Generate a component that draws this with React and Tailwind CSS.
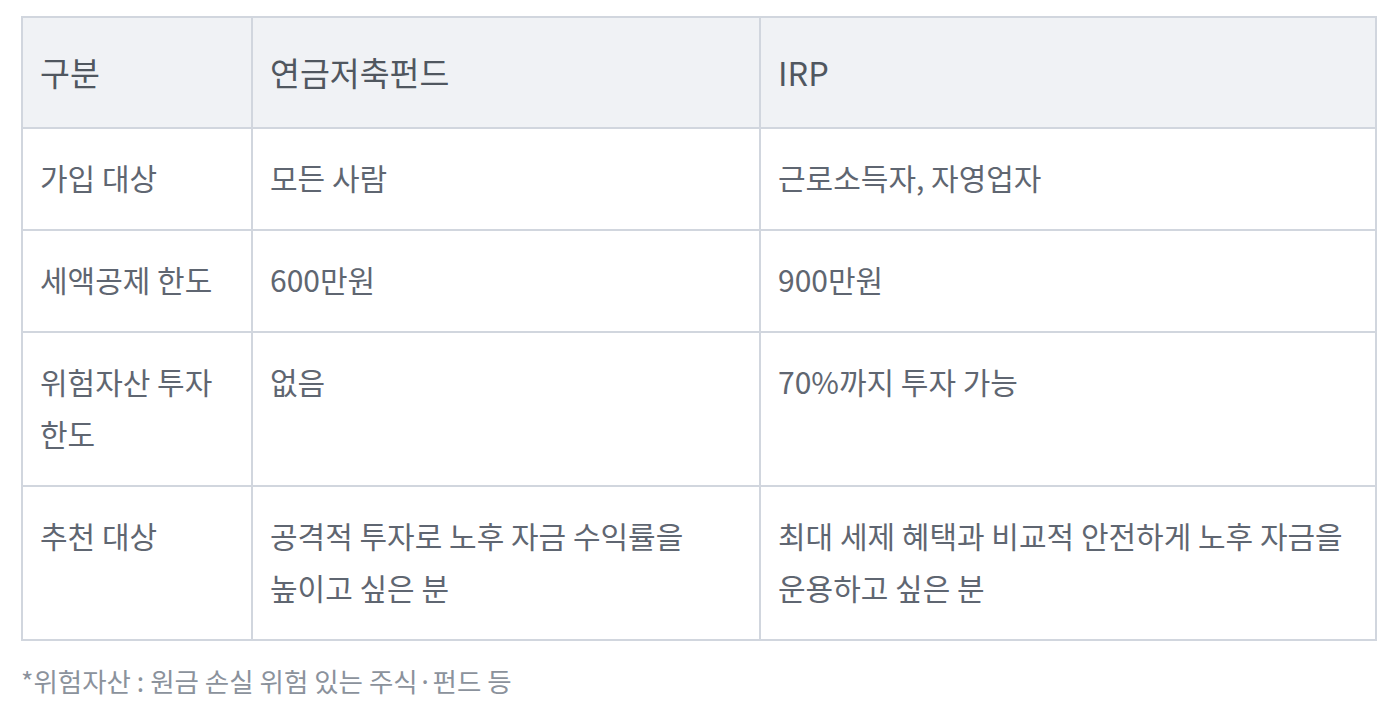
import React from "react";

const rows = [
  ["가입 대상", "모든 사람", "근로소득자, 자영업자"],
  ["세액공제 한도", "600만원", "900만원"],
  ["위험자산 투자 한도", "없음", "70%까지 투자 가능"],
  ["추천 대상", "공격적 투자로 노후 자금 수익률을 높이고 싶은 분", "최대 세제 혜택과 비교적 안전하게 노후 자금을 운용하고 싶은 분"],
];

const App = () => {
  return (
    <div
      className="bg-white w-[1397px] h-[709px] pl-[21px] pt-[16px] text-[#5f6671] break-keep"
      style={{ fontFamily: '"Noto Sans CJK KR", "Noto Sans", sans-serif' }}
    >
      <table className="border-collapse w-[1356px] table-fixed">
        <colgroup>
          <col className="w-[230px]" />
          <col className="w-[508px]" />
          <col />
        </colgroup>
        <thead>
          <tr className="bg-[#f0f2f5]">
            {["구분", "연금저축펀드", "IRP"].map((h) => (
              <th
                key={h}
                className="border-2 border-[#d1d6de] text-left font-normal text-[32.5px] leading-[55px] text-[#50575f] px-[17px] pt-[26px] pb-[28px] align-top"
              >
                {h}
              </th>
            ))}
          </tr>
        </thead>
        <tbody>
          {rows.map((r) => (
            <tr key={r[0]}>
              {r.map((c, i) => (
                <td
                  key={i}
                  className="border-2 border-[#d1d6de] text-[30px] leading-[52px] px-[17px] pt-[22px] pb-[26px] align-top"
                >
                  {c}
                </td>
              ))}
            </tr>
          ))}
        </tbody>
      </table>
      <p className="mt-[22px] text-[26.5px] leading-[36px] text-[#8b929c]">
        *위험자산 : 원금 손실 위험 있는 주식·펀드 등
      </p>
    </div>
  );
};

export default App;
